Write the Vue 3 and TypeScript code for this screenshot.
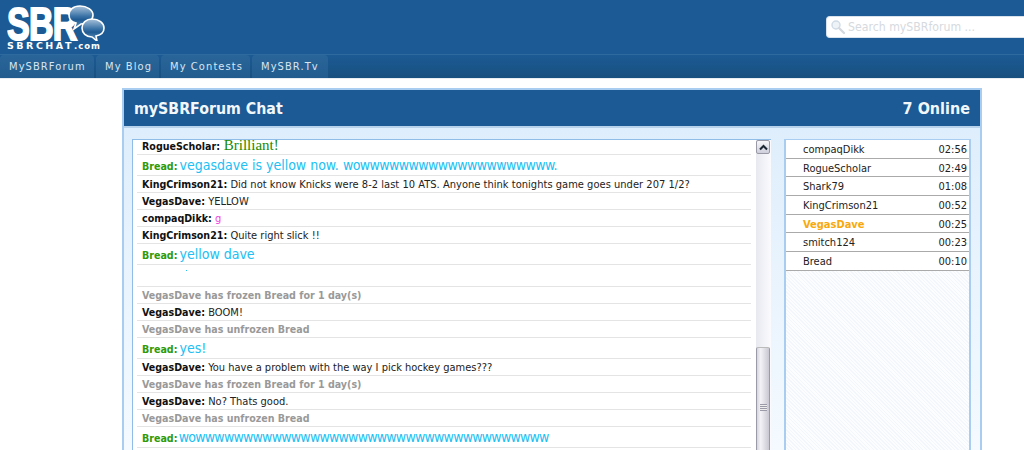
<script setup lang="ts">
interface Row { name?: string; text?: string; tail?: string; kind: string; fit?: string }
const rows: Row[] = [
  { name: 'RogueScholar', text: 'Brilliant!', kind: 'serif' },
  { name: 'Bread', text: 'vegasdave is yellow now. ', tail: 'wowwwwwwwwwwwwwwwwwwww.', kind: 'big' },
  { name: 'KingCrimson21', text: 'Did not know Knicks were 8-2 last 10 ATS. Anyone think tonights game goes under 207 1/2?', kind: 'plain', fit: 'fit-c' },
  { name: 'VegasDave', text: 'YELLOW', kind: 'plain' },
  { name: 'compaqDikk', text: 'g', kind: 'pink' },
  { name: 'KingCrimson21', text: 'Quite right slick !!', kind: 'plain' },
  { name: 'Bread', text: 'yellow dave', kind: 'big' },
  { kind: 'blank' },
  { text: 'VegasDave has frozen Bread for 1 day(s)', kind: 'sys' },
  { name: 'VegasDave', text: 'BOOM!', kind: 'plain' },
  { text: 'VegasDave has unfrozen Bread', kind: 'sys' },
  { name: 'Bread', text: 'yes!', kind: 'big' },
  { name: 'VegasDave', text: 'You have a problem with the way I pick hockey games???', kind: 'plain' },
  { text: 'VegasDave has frozen Bread for 1 day(s)', kind: 'sys' },
  { name: 'VegasDave', text: 'No? Thats good.', kind: 'plain' },
  { text: 'VegasDave has unfrozen Bread', kind: 'sys' },
  { name: 'Bread', text: 'wowwwwwwwwwwwwwwwwwwwwwwwwwwwwwwwwwwwww', kind: 'big', fit: 'fit-b' },
]
const users = [
  { n: 'compaqDikk', t: '02:56' },
  { n: 'RogueScholar', t: '02:49' },
  { n: 'Shark79', t: '01:08' },
  { n: 'KingCrimson21', t: '00:52' },
  { n: 'VegasDave', t: '00:25', hi: true },
  { n: 'smitch124', t: '00:23' },
  { n: 'Bread', t: '00:10' },
]
const tabs = ['MySBRForum', 'My Blog', 'My Contests', 'MySBR.Tv']
</script>

<template>
  <div class="page">
    <header class="top">
      <div class="logo">
        <span class="sbr">SBR</span>
        <span class="site">SBRCHAT<small>.com</small></span>
        <svg class="bubbles" width="38" height="36" viewBox="0 0 38 36">
          <defs>
            <linearGradient id="bg" x1="0" y1="0" x2="0" y2="1">
              <stop offset="0" stop-color="#a9c3da" />
              <stop offset="0.45" stop-color="#3a72a6" />
              <stop offset="0.6" stop-color="#1f5a92" />
              <stop offset="1" stop-color="#6f9cc4" />
            </linearGradient>
          </defs>
          <path d="M13 1C6 1 2 5 2 10c0 4 3 7 7 8l-2 6 7-5c7 0 12-4 12-9S20 1 13 1z" fill="url(#bg)" stroke="#fff" stroke-width="1.6" />
          <path d="M25 14c-6 0-10 4-10 9s4 9 10 9l5 4-1-5c5-1 8-4 8-8 0-5-5-9-12-9z" fill="url(#bg)" stroke="#fff" stroke-width="1.6" />
        </svg>
      </div>
      <label class="search">
        <svg width="16" height="16" viewBox="0 0 16 16">
          <circle cx="6" cy="6" r="4" fill="#eef3f8" stroke="#cfdbe6" stroke-width="1.4" />
          <path d="M9 9l5 5" stroke="#d4d9de" stroke-width="2.4" stroke-linecap="round" />
        </svg>
        <span>Search mySBRforum ...</span>
      </label>
    </header>
    <nav class="nav">
      <a v-for="t in tabs" :key="t" class="tab">{{ t }}</a>
    </nav>
    <main class="panel">
      <div class="title">
        <h1>mySBRForum Chat</h1>
        <strong>7 Online</strong>
      </div>
      <div class="body">
        <section class="chat">
          <div class="log">
            <div v-for="(r, i) in rows" :key="i" class="row" :class="['k-' + r.kind, r.fit]">
              <template v-if="r.kind === 'blank'"><i class="speck"></i></template>
              <template v-else-if="r.kind === 'sys'">{{ r.text }}</template>
              <template v-else>
                <b class="who">{{ r.name }}:</b>
                <span class="msg">{{ ' ' + r.text }}<span v-if="r.tail" class="tail">{{ r.tail }}</span></span>
              </template>
            </div>
          </div>
          <div class="scroll">
            <div class="up">
              <svg width="9" height="7" viewBox="0 0 9 7"><path d="M1 5.5l3.5-3.5 3.5 3.5" fill="none" stroke="#1c2733" stroke-width="2" /></svg>
            </div>
            <div class="thumb"><i class="grip"></i></div>
          </div>
        </section>
        <aside class="users">
          <div v-for="u in users" :key="u.n" class="user">
            <span :class="{ hi: u.hi }">{{ u.n }}</span>
            <span>{{ u.t }}</span>
          </div>
        </aside>
      </div>
    </main>
  </div>
</template>

<style>
html, body { margin: 0; overflow: hidden; background: #fff; }
</style>

<style scoped>
.page { width: 1024px; height: 450px; overflow: hidden; background: #fff; font-family: "DejaVu Sans Condensed", "DejaVu Sans", sans-serif; }
.top { height: 55px; box-sizing: border-box; background: #1b5a94; display: flex; align-items: flex-start; justify-content: space-between; border-bottom: 1px solid #2f6a9f; }
.logo { position: relative; width: 120px; height: 54px; flex: none; }
.sbr { position: absolute; left: 7px; top: 7px; font: 900 46px/34px "Liberation Sans", sans-serif; color: #fff; letter-spacing: -1px; transform: scaleX(.74); transform-origin: left top; -webkit-text-stroke: 2px #fff; }
.site { position: absolute; left: 7px; top: 41px; font: 700 9.5px/9px "DejaVu Sans", sans-serif; color: #fff; letter-spacing: 2.5px; white-space: nowrap; }
.site small { font-size: 8.5px; letter-spacing: 1px; }
.bubbles { position: absolute; left: 67px; top: 5px; }
.search { width: 198px; height: 22px; margin: 16px 0 0 auto; background: #fff; border-radius: 4px 0 0 4px; border: 1px solid #d9e2ea; border-right: 0; box-sizing: border-box; display: flex; align-items: center; gap: 2px; padding-left: 3px; font-size: 12.2px; color: #d6dade; white-space: nowrap; overflow: hidden; }
.nav { height: 24px; box-sizing: border-box; background: linear-gradient(#1c5a94, #18507f); display: flex; gap: 2px; border-bottom: 1px solid #e8edf2; }
.tab { height: 23px; box-sizing: border-box; padding: 0 9px; background: linear-gradient(#2a6599, #225c8f); border-radius: 4px 4px 0 0; color: #d8e6f2; font-size: 11px; line-height: 24px; letter-spacing: 1.1px; white-space: nowrap; }
.tab:nth-child(1) { width: 94px; }
.tab:nth-child(2) { width: 63px; }
.tab:nth-child(3) { width: 89px; }
.tab:nth-child(4) { width: 76px; }
.panel { width: 860px; margin: 9px 0 0 122px; border: 2px solid #a9cdf0; box-sizing: border-box; height: 400px; background: #fff; }
.title { height: 38px; box-sizing: border-box; background: #1b5a94; display: flex; align-items: center; justify-content: space-between; padding: 0 10px 0 10px; color: #fff; border-bottom: 2px solid #b7d2ea; }
.title h1 { margin: 0; font-size: 15.8px; font-weight: 700; color: #f2f7fb; }
.title strong { font-size: 16px; font-weight: 700; color: #f2f7fb; }
.body { display: flex; align-items: flex-start; padding: 11px 8px 0 8px; height: 350px; box-sizing: border-box; background: linear-gradient(#dfeefc, #f6fbff); }
.chat { width: 639px; height: 330px; flex: none; display: flex; background: #fff; border: 1px solid #8fbde8; border-bottom: 0; box-sizing: border-box; }
.log { width: 623px; padding: 0 1px 0 4px; box-sizing: border-box; flex: none; overflow: hidden; }
.row { height: 17px; box-sizing: border-box; border-bottom: 1px solid #e4e4e4; font-size: 11px; line-height: 16px; color: #222; white-space: pre; padding-left: 5px; margin-right: 4px; overflow: hidden; }
.who { color: #111; font-weight: 700; font-size: 10.6px; }
.k-big { height: 21px; line-height: 20px; }
.k-big .who { color: #2f9a0a; }
.k-big .msg { font-size: 14px; color: #20c0f4; margin-left: -2px; }
.tail { letter-spacing: -.55px; }
.fit-b .msg { letter-spacing: -.75px; }
.fit-c .msg { letter-spacing: .03px; }
.k-serif { height: 15px; line-height: 10px; }
.k-serif .msg { font-family: "Liberation Serif", serif; font-size: 15px; color: #1a8a00; line-height: 10px; }
.k-pink .msg { color: #f03fe0; }
.k-sys { font-weight: 700; color: #999; font-size: 10.6px; }
.k-blank { height: 22px; position: relative; }
.speck { position: absolute; left: 49px; top: 5px; width: 1px; height: 1px; background: #20c0f4; }
.scroll { width: 15px; flex: none; height: 100%; background: linear-gradient(90deg, #e8e9f0, #fbfbfe); position: relative; }
.up { width: 14px; height: 14px; box-sizing: border-box; border: 1px solid #9a9aa6; border-radius: 2px; background: linear-gradient(#f6f6fa, #cfcfdc); display: flex; align-items: center; justify-content: center; }
.thumb { position: absolute; left: 0; top: 207px; width: 14px; height: 140px; box-sizing: border-box; border: 1px solid #9a9aa8; border-top-color: #bbb; background: linear-gradient(90deg, #d6d4dd, #f3f3f7 30%, #c9c7d2); border-radius: 2px; }
.grip { position: absolute; left: 3px; top: 56px; width: 7px; height: 7px; background: repeating-linear-gradient(#9a9aa8 0 1px, #eee 1px 2px); }
.users { width: 187px; height: 330px; margin-left: 13px; flex: none; box-sizing: border-box; border: 1px solid #a9cdf0; border-width: 1px 2px 0; background: repeating-linear-gradient(45deg, #f3f6fa 0 1px, #fcfdfe 1px 2.5px); font-size: 11px; color: #222; }
.user { height: 18.7px; box-sizing: border-box; background: #fff; border-bottom: 1px solid #aaa; display: flex; justify-content: space-between; padding: 1px 2px 0 17px; line-height: 18px; }
.hi { color: #f8a90e; font-weight: 700; }
</style>
